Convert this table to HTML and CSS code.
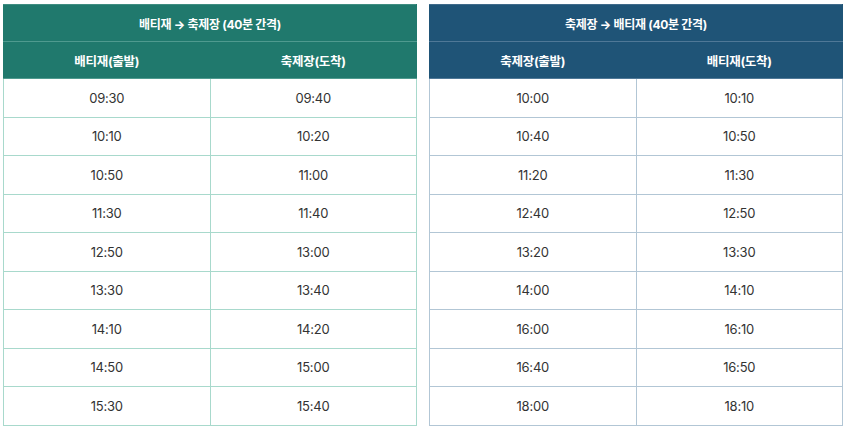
FILE: index.html
```html
<!DOCTYPE html>
<html lang="ko">
<head>
<meta charset="utf-8">
<title>셔틀버스 시간표</title>
<link rel="stylesheet" href="styles.css">
</head>
<body>
<div class="wrap">
  <table class="tt tt-green">
    <thead>
      <tr class="title"><th colspan="2">배티재 → 축제장 (40분 간격)</th></tr>
      <tr class="head"><th>배티재(출발)</th><th>축제장(도착)</th></tr>
    </thead>
    <tbody>
      <tr><td>09:30</td><td>09:40</td></tr>
      <tr><td>10:10</td><td>10:20</td></tr>
      <tr><td>10:50</td><td>11:00</td></tr>
      <tr><td>11:30</td><td>11:40</td></tr>
      <tr><td>12:50</td><td>13:00</td></tr>
      <tr><td>13:30</td><td>13:40</td></tr>
      <tr><td>14:10</td><td>14:20</td></tr>
      <tr><td>14:50</td><td>15:00</td></tr>
      <tr><td>15:30</td><td>15:40</td></tr>
    </tbody>
  </table>
  <table class="tt tt-blue">
    <thead>
      <tr class="title"><th colspan="2">축제장 → 배티재 (40분 간격)</th></tr>
      <tr class="head"><th>축제장(출발)</th><th>배티재(도착)</th></tr>
    </thead>
    <tbody>
      <tr><td>10:00</td><td>10:10</td></tr>
      <tr><td>10:40</td><td>10:50</td></tr>
      <tr><td>11:20</td><td>11:30</td></tr>
      <tr><td>12:40</td><td>12:50</td></tr>
      <tr><td>13:20</td><td>13:30</td></tr>
      <tr><td>14:00</td><td>14:10</td></tr>
      <tr><td>16:00</td><td>16:10</td></tr>
      <tr><td>16:40</td><td>16:50</td></tr>
      <tr><td>18:00</td><td>18:10</td></tr>
    </tbody>
  </table>
</div>
</body>
</html>
```

FILE: styles.css
```css
html, body {
  margin: 0;
  padding: 0;
  background: #ffffff;
}
body {
  font-family: Inter, "Noto Sans CJK KR", sans-serif;
  color: #333333;
}
.wrap {
  display: flex;
  gap: 12px;
  padding: 4px 5px 0 3px;
}
.tt {
  width: 414px;
  border-collapse: collapse;
  table-layout: fixed;
  text-align: center;
}
.tt th, .tt td {
  padding: 0;
  text-align: center;
}
.tt th {
  color: #ffffff;
  font-weight: 700;
  font-size: 12px;
  letter-spacing: -0.3px;
}
.tt .title th {
  height: 36px;
}
.tt .head th {
  height: 36px;
  font-size: 12.5px;
}
.tt td {
  height: 37.5px;
  font-size: 13px;
  color: #333333;
  letter-spacing: -0.2px;
}
.tt-green thead {
  background: #20796d;
}
.tt-green th {
  border: 1px solid #4f9a8f;
  border-top-color: #3f8d81;
}
.tt-green td {
  border: 1px solid #a8d9cc;
}
.tt-blue thead {
  background: #1f5477;
}
.tt-blue th {
  border: 1px solid #4f7897;
  border-top-color: #3f6a8a;
}
.tt-blue td {
  border: 1px solid #b2c6d5;
}
.tt-green .title th, .tt-green .head th {
  border-left-color: #20796d;
  border-right-color: #20796d;
}
.tt-green .head th + th {
  border-left-color: #4f9a8f;
}
.tt-blue .title th, .tt-blue .head th {
  border-left-color: #1f5477;
  border-right-color: #1f5477;
}
.tt-blue .head th + th {
  border-left-color: #4f7897;
}
```
